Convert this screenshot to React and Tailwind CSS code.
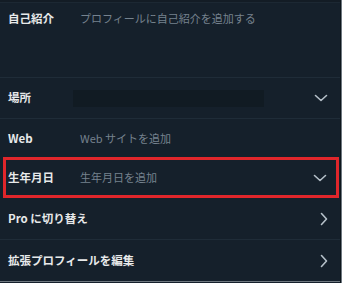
const FONT = '"Noto Sans CJK JP", "Liberation Sans", sans-serif';

function ChevronDown() {
    return (
        <svg width="14" height="8" viewBox="0 0 14 8" fill="none" stroke="#b5c0c9" strokeWidth="1.6" strokeLinecap="round" strokeLinejoin="round">
            <polyline points="1.5 1.5 7 6.5 12.5 1.5" />
        </svg>
    );
}

function ChevronRight() {
    return (
        <svg width="8" height="14" viewBox="0 0 8 14" fill="none" stroke="#b5c0c9" strokeWidth="1.6" strokeLinecap="round" strokeLinejoin="round">
            <polyline points="1.5 1.5 6.5 7 1.5 12.5" />
        </svg>
    );
}

function Row({ label, placeholder, right, className = '', children }) {
    return (
        <div className={`flex items-center pl-[8px] pr-[12px] ${className}`}>
            <div className="min-w-[72px] whitespace-nowrap text-[11.5px] font-bold text-[#e7e9ea]">{label}</div>
            <div className="flex-1 text-[11px] text-[#75828e]">{placeholder}{children}</div>
            {right}
        </div>
    );
}

function Divider() {
    return <div className="h-px bg-[#1f2c38]" />;
}

export default function App() {
    return (
        <div className="w-[342px] h-[283px] overflow-hidden bg-[#15202b] flex" style={{ fontFamily: FONT }}>
            <div className="flex-1 flex flex-col">
                <div className="h-[3px] bg-[#131c25] border-b border-[#1c2833]" />
                <Row label="自己紹介" placeholder="プロフィールに自己紹介を追加する" className="h-[74px] !items-start pt-[7px]" />
                <Divider />
                <Row label="場所" className="h-[40px]" right={<ChevronDown />}>
                    <div className="w-[191px] h-[17px] -ml-[7px] bg-[#111b23]" />
                </Row>
                <Divider />
                <Row label="Web" placeholder="Web サイトを追加" className="h-[38px] pt-[1px]" />
                <div className="h-[41px] border-[3px] border-[#e0262b] ml-[3px] mr-[1px] flex items-center pl-[2px] pr-[9px]">
                    <div className="w-[72px] shrink-0 text-[11.5px] font-bold text-[#e7e9ea]">生年月日</div>
                    <div className="flex-1 text-[11px] text-[#75828e]">生年月日を追加</div>
                    <ChevronDown />
                </div>
                <Row label="Pro に切り替え" className="h-[41px]" right={<ChevronRight />} />
                <Divider />
                <Row label="拡張プロフィールを編集" className="h-[41px]" right={<ChevronRight />} />
                <div className="h-px bg-[#6f7880]" />
            </div>
            <div className="w-px bg-[#0d151c]" />
            <div className="w-px bg-[#6f7880]" />
        </div>
    );
}
